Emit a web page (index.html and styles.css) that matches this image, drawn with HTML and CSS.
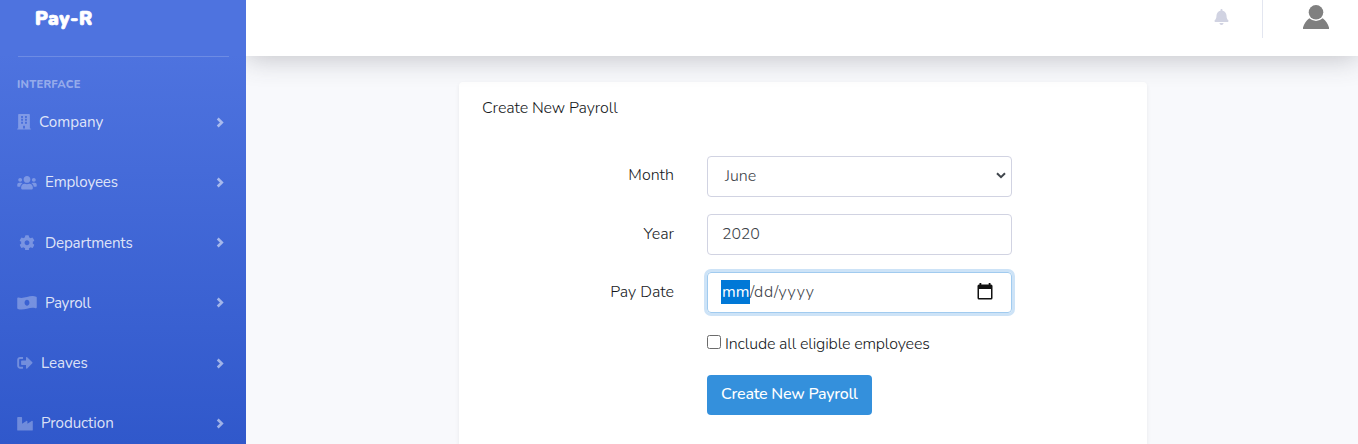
FILE: index.html
```html
<!DOCTYPE html>
<html lang="en">
<head>
<meta charset="utf-8">
<title>Pay-R - Create New Payroll</title>
<link rel="stylesheet" href="styles.css">
</head>
<body>
<div class="wrapper">
  <nav class="sidebar">
    <a class="brand"><span>Pay-R</span></a>
    <hr class="divider">
    <div class="heading"><span class="t-interface">Interface</span></div>
    <ul class="nav">
      <li class="item">
        <svg class="icon narrow" viewBox="0 0 448 512"><path d="M436 480h-20V24c0-13.300-10.700-24-24-24H56C42.700 0 32 10.700 32 24v456H12c-6.600 0-12 5.400-12 12v20h448v-20c0-6.600-5.400-12-12-12zM128 76c0-6.600 5.400-12 12-12h40c6.600 0 12 5.400 12 12v40c0 6.600-5.400 12-12 12h-40c-6.600 0-12-5.400-12-12V76zm0 96c0-6.600 5.400-12 12-12h40c6.600 0 12 5.400 12 12v40c0 6.600-5.400 12-12 12h-40c-6.600 0-12-5.400-12-12v-40zm52 148h-40c-6.600 0-12-5.400-12-12v-40c0-6.600 5.400-12 12-12h40c6.600 0 12 5.400 12 12v40c0 6.600-5.400 12-12 12zm76 160h-64v-84c0-6.600 5.400-12 12-12h40c6.600 0 12 5.400 12 12v84zm64-172c0 6.600-5.400 12-12 12h-40c-6.600 0-12-5.400-12-12v-40c0-6.600 5.400-12 12-12h40c6.600 0 12 5.400 12 12v40zm0-96c0 6.600-5.400 12-12 12h-40c-6.600 0-12-5.400-12-12v-40c0-6.600 5.400-12 12-12h40c6.600 0 12 5.400 12 12v40zm0-96c0 6.600-5.400 12-12 12h-40c-6.600 0-12-5.400-12-12V76c0-6.600 5.400-12 12-12h40c6.600 0 12 5.400 12 12v40z"/></svg>
        <span class="t-company">Company</span>
        <svg class="chevron" viewBox="0 0 8 11"><path d="M1.700 1.500 5.800 5.500 1.700 9.500"/></svg>
      </li>
      <li class="item">
        <svg class="icon wide" viewBox="0 0 640 512"><path d="M96 224c35.300 0 64-28.700 64-64s-28.700-64-64-64-64 28.700-64 64 28.700 64 64 64zm448 0c35.300 0 64-28.700 64-64s-28.700-64-64-64-64 28.700-64 64 28.700 64 64 64zm32 32h-64c-17.600 0-33.500 7.100-45.100 18.600 40.300 22.100 68.900 62 75.100 109.400h66c17.700 0 32-14.300 32-32v-32c0-35.300-28.700-64-64-64zm-256 0c61.900 0 112-50.100 112-112S381.900 32 320 32 208 82.100 208 144s50.100 112 112 112zm76.800 32h-8.300c-20.800 10-43.900 16-68.500 16s-47.600-6-68.500-16h-8.300C179.600 288 128 339.600 128 403.200V432c0 26.500 21.500 48 48 48h288c26.500 0 48-21.500 48-48v-28.800c0-63.600-51.600-115.200-115.200-115.200zm-223.700-13.400C161.500 263.100 145.600 256 128 256H64c-35.300 0-64 28.700-64 64v32c0 17.700 14.300 32 32 32h65.900c6.300-47.400 34.900-87.300 75.200-109.400z"/></svg>
        <span class="t-employees">Employees</span>
        <svg class="chevron" viewBox="0 0 8 11"><path d="M1.700 1.500 5.800 5.500 1.700 9.500"/></svg>
      </li>
      <li class="item">
        <svg class="icon wide" viewBox="-64 0 640 512"><path d="M487.400 315.700l-42.600-24.600c4.300-23.200 4.300-47 0-70.200l42.600-24.600c4.900-2.800 7.100-8.600 5.500-14-11.100-35.600-30-67.800-54.700-94.600-3.800-4.100-10-5.100-14.800-2.300L380.800 110c-17.900-15.400-38.500-27.300-60.800-35.100V25.800c0-5.600-3.900-10.500-9.400-11.700-36.700-8.200-74.300-7.800-109.200 0-5.500 1.200-9.400 6.100-9.400 11.700V75c-22.200 7.900-42.800 19.800-60.800 35.100L88.700 85.500c-4.900-2.800-11-1.900-14.800 2.300-24.700 26.700-43.600 58.900-54.700 94.600-1.700 5.400.6 11.200 5.500 14L67.300 221c-4.300 23.200-4.300 47 0 70.200l-42.600 24.600c-4.900 2.800-7.100 8.600-5.500 14 11.100 35.600 30 67.800 54.700 94.600 3.800 4.100 10 5.100 14.800 2.300l42.600-24.600c17.900 15.400 38.500 27.300 60.800 35.100v49.200c0 5.600 3.900 10.500 9.400 11.700 36.700 8.200 74.300 7.800 109.200 0 5.500-1.200 9.400-6.100 9.400-11.700v-49.200c22.200-7.900 42.800-19.800 60.800-35.100l42.600 24.600c4.900 2.800 11 1.900 14.800-2.300 24.700-26.700 43.600-58.900 54.700-94.600 1.500-5.500-.7-11.300-5.600-14.100zM256 336c-44.100 0-80-35.900-80-80s35.900-80 80-80 80 35.900 80 80-35.900 80-80 80z"/></svg>
        <span class="t-departments">Departments</span>
        <svg class="chevron" viewBox="0 0 8 11"><path d="M1.700 1.500 5.800 5.500 1.700 9.500"/></svg>
      </li>
      <li class="item">
        <svg class="icon wide" viewBox="0 0 640 512"><path d="M621.200 54.500C582.400 38.200 543.600 32 504.800 32 381.600 32 258.400 94.800 135.200 94.800c-31.100 0-62.200-4-93.300-14.100C20.900 73.800 0 89.300 0 111.300v317.600c0 12.600 7.200 24.600 18.800 29.500C57.600 474.700 96.400 480 135.200 480c123.200 0 246.400-62.700 369.600-62.700 31.100 0 62.200 4 93.300 14.100 21 6.900 41.900-8.600 41.900-30.600V84c0-12.600-7.200-24.600-18.800-29.500zM320 352c-44.200 0-80-43-80-96s35.800-96 80-96 80 43 80 96-35.800 96-80 96z"/></svg>
        <span class="t-payroll">Payroll</span>
        <svg class="chevron" viewBox="0 0 8 11"><path d="M1.700 1.500 5.800 5.500 1.700 9.500"/></svg>
      </li>
      <li class="item">
        <svg class="icon" viewBox="0 0 512 512"><path d="M497 273L329 441c-15 15-41 4.500-41-17v-96H152c-13.300 0-24-10.700-24-24v-96c0-13.300 10.700-24 24-24h136V88c0-21.400 25.900-32 41-17l168 168c9.300 9.400 9.300 24.600 0 34zM192 436v-40c0-6.600-5.400-12-12-12H96c-17.700 0-32-14.300-32-32V160c0-17.700 14.300-32 32-32h84c6.600 0 12-5.400 12-12V76c0-6.600-5.400-12-12-12H96c-53 0-96 43-96 96v192c0 53 43 96 96 96h84c6.600 0 12-5.400 12-12z"/></svg>
        <span class="t-leaves">Leaves</span>
        <svg class="chevron" viewBox="0 0 8 11"><path d="M1.700 1.500 5.800 5.500 1.700 9.500"/></svg>
      </li>
      <li class="item">
        <svg class="icon" viewBox="0 0 512 512"><path d="M475.100 163.800L336 252.300v-68.300c0-18.900-20.900-30.400-36.900-20.200L160 252.300V56c0-13.300-10.700-24-24-24H24C10.700 32 0 42.700 0 56v400c0 13.300 10.700 24 24 24h464c13.300 0 24-10.700 24-24V184c0-18.900-20.900-30.400-36.900-20.200z"/></svg>
        <span class="t-production">Production</span>
        <svg class="chevron" viewBox="0 0 8 11"><path d="M1.700 1.500 5.800 5.500 1.700 9.500"/></svg>
      </li>
    </ul>
  </nav>
  <div class="content">
    <header class="topbar">
      <svg class="bell" viewBox="0 0 448 512"><path d="M224 512c35.300 0 63.900-28.700 63.900-64H160.100c0 35.300 28.600 64 63.900 64zm215.400-149.700c-19.300-20.800-55.500-52-55.500-154.300 0-77.700-54.500-139.900-127.900-155.200V32c0-17.700-14.300-32-32-32s-32 14.300-32 32v20.800C118.600 68.100 64.100 130.300 64.100 208c0 102.300-36.200 133.500-55.500 154.300-6 6.500-8.700 14.200-8.600 21.700.1 16.400 13 32 32.100 32h383.800c19.100 0 32-15.600 32.100-32 .1-7.500-2.600-15.300-8.600-21.700z"/></svg>
      <span class="bar"></span>
      <svg class="user" viewBox="0 0 26 24"><path d="M0 24v-1.500C1 19 3 15.500 6.300 13.200Q13 18.800 19.700 13.200C23 15.500 25 19 26 22.500V24z"/><circle cx="13" cy="7.300" r="7.300"/></svg>
    </header>
    <main class="card">
      <div class="card-header"><span class="t-title">Create New Payroll</span></div>
      <form class="form">
        <label class="label month"><span class="t-month">Month</span></label>
        <div class="control select">
          <span class="t-june">June</span>
          <svg class="caret" viewBox="0 0 10 7"><path d="M1 1.200 5 5.200 9 1.200"/></svg>
        </div>
        <label class="label"><span class="t-year">Year</span></label>
        <div class="control"><span class="t-2020">2020</span></div>
        <label class="label"><span class="t-paydate">Pay Date</span></label>
        <div class="control focus">
          <span class="segment"><span class="t-mm">mm</span></span><span class="t-rest">/dd/yyyy</span>
          <svg class="calendar" viewBox="0 0 16 17"><path fill-rule="evenodd" d="M2.500 0h1.800v1.500h7.400V0h1.800v1.500h.5q1.500 0 1.500 1.500v12q0 1.500-1.500 1.500H2Q.5 16.500.5 15V3Q.5 1.500 2 1.500h.5zM2 6v9h12V6z"/></svg>
        </div>
        <label class="check"><span class="box"></span><span class="t-include">Include all eligible employees</span></label>
        <button class="submit" type="button"><span class="t-submit">Create New Payroll</span></button>
      </form>
    </main>
  </div>
</div>
</body>
</html>
```
FILE: styles.css
```css
* { box-sizing: border-box; }
body {
  margin: 0;
  height: 444px;
  overflow: hidden;
  font-family: Nunito, Lato, "Open Sans", sans-serif;
  font-size: 16px;
  line-height: 24px;
  color: #15181b;
  background: #f8f9fc;
}
span { white-space: nowrap; }
svg { display: block; flex: none; }
.wrapper { display: flex; height: 444px; }

.sidebar {
  width: 246px;
  height: 444px;
  flex: none;
  overflow: hidden;
  background: linear-gradient(180deg, #4e73df 0%, #4e73df 12%, #3058cb 100%);
}
.brand {
  display: block;
  height: 56px;
  padding: 7px 0 0 35px;
  color: #fff;
  font-size: 19px;
  letter-spacing: .6px;
  font-weight: 900;
  -webkit-text-stroke: .7px #fff;
}
.divider { margin: 0 17px 0 18px; border: 0; border-top: 1px solid rgba(255,255,255,.18); }
.heading {
  height: 35px;
  padding: 17px 0 0 17px;
  font-size: 11.200px;
  line-height: 22px;
  font-weight: 800;
  text-transform: uppercase;
  letter-spacing: .2px;
  color: rgba(255,255,255,.42);
}
.nav { list-style: none; margin: 0; padding: 0; }
.item {
  display: flex;
  align-items: center;
  height: 60.250px;
  padding: 0 22px 0 17px;
  font-size: 15.200px;
  color: rgba(255,255,255,.84);
}
.t-employees, .t-departments { letter-spacing: -.2px; }
.t-payroll { letter-spacing: -.3px; }
.t-leaves, .t-production { letter-spacing: -.1px; }
.icon { width: 16px; height: 15.600px; margin-right: 8px; fill: rgba(255,255,255,.3); }
.icon.narrow { width: 14px; }
.icon.wide { width: 20px; }
.chevron { width: 8px; height: 11px; margin-left: auto; fill: none; stroke: rgba(255,255,255,.53); stroke-width: 2.600; }

.content { flex: 1; display: flex; flex-direction: column; align-items: center; }
.topbar {
  display: flex;
  justify-content: flex-end;
  align-items: flex-start;
  width: 100%;
  height: 56px;
  flex: none;
  padding-right: 29px;
  background: #fff;
  box-shadow: 0 2px 28px rgba(58,59,69,.3);
  clip-path: inset(0 0 -40px 0);
}
.bell { width: 15px; height: 16px; margin-top: 9px; fill: #d1d3e2; }
.bar { width: 1px; height: 38px; margin: 0 40px 0 33px; background: #e3e6f0; }
.user { width: 26px; height: 24px; margin-top: 5px; fill: #808080; }

.card {
  width: 688px;
  flex: 1;
  margin: 26px 0 0 2px;
  background: #fff;
  border-radius: 4px 4px 0 0;
  box-shadow: 0 2px 4px rgba(0,0,0,.075);
  font-weight: 300;
}
.card-header { height: 74px; padding: 14px 0 0 23px; letter-spacing: -.1px; }
.form {
  display: grid;
  grid-template-columns: 215px 305px;
  grid-template-rows: 41px 41px 41px 28px 40px;
  column-gap: 33px;
  row-gap: 17px;
}
.label { padding-top: 8px; text-align: right; }
.month { padding-top: 7px; }
.control {
  display: flex;
  align-items: center;
  padding: 0 14px 2px;
  border: 1px solid #d1d3e2;
  border-radius: 4px;
  color: #3c4248;
}
.select { padding: 0 5px 2px 17px; }
.t-2020 { letter-spacing: -.2px; }
.caret { width: 10px; height: 7px; margin-left: auto; fill: none; stroke: #40464c; stroke-width: 2; }
.focus { border-color: #a1cbef; box-shadow: 0 0 0 3px #cde3f7; }
.segment { width: 29px; height: 24px; margin-left: -1px; padding-left: 1px; background: #0078d7; color: #fff; font-weight: 400; }
.t-rest { letter-spacing: .75px; }
.calendar { width: 16px; height: 17px; margin-left: auto; margin-right: 4px; fill: #111; }
.check { grid-column: 2; display: flex; align-items: flex-start; padding-top: 1px; }
.t-include { padding-top: 1px; letter-spacing: -.15px; }
.box { width: 14px; height: 14px; margin: 4px 4px 0 0; border: 1px solid #6b6b6b; border-radius: 2.500px; }
.submit {
  grid-column: 2;
  justify-self: start;
  width: 165px;
  height: 40px;
  padding: 0 0 2px 14px;
  border: 0;
  border-radius: 4px;
  background: #3490dc;
  color: #fff;
  font: inherit;
  font-weight: 500;
  letter-spacing: -.23px;
  text-align: left;
}
```
